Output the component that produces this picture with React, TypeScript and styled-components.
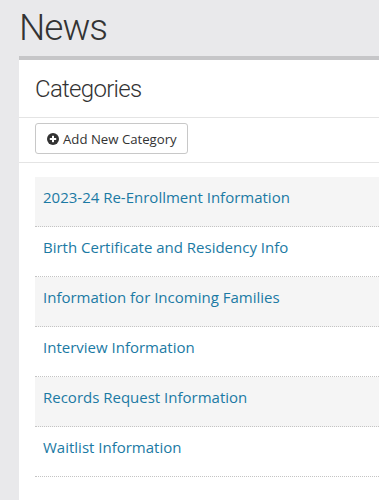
import styled, { createGlobalStyle } from 'styled-components'

const categories = [
  '2023-24 Re-Enrollment Information',
  'Birth Certificate and Residency Info',
  'Information for Incoming Families',
  'Interview Information',
  'Records Request Information',
  'Waitlist Information',
]

export default function App() {
  return (
    <>
      <GlobalStyle />
      <Page>
        <PageTitle>News</PageTitle>
        <Panel>
          <PanelHeader>
            <PanelTitle>Categories</PanelTitle>
          </PanelHeader>
          <Toolbar>
            <Button type="button">
              <PlusCircle />
              Add New Category
            </Button>
          </Toolbar>
          <List>
            {categories.map((c, i) => (
              <Row key={c} shaded={i % 2 === 0}>
                <Link href="#">{c}</Link>
              </Row>
            ))}
          </List>
        </Panel>
      </Page>
    </>
  )
}

function PlusCircle() {
  return (
    <svg width="12" height="12" viewBox="0 0 12 12" aria-hidden="true">
      <circle cx="6" cy="6" r="6" fill="#333" />
      <rect x="2.8" y="5" width="6.4" height="2" fill="#fff" />
      <rect x="5" y="2.8" width="2" height="6.4" fill="#fff" />
    </svg>
  )
}

const GlobalStyle = createGlobalStyle`
  html, body {
    margin: 0;
    background: #e9e9eb;
  }
  * { box-sizing: border-box; }
`

const Page = styled.div`
  min-height: 500px;
  display: flex;
  flex-direction: column;
  padding-top: 4px;
  overflow: hidden;
`

const PageTitle = styled.h1`
  margin: 0 0 5px 19px;
  font-family: Roboto, sans-serif;
  font-weight: 300;
  font-size: 37px;
  letter-spacing: -1px;
  line-height: 47px;
  color: #333;
`

const Panel = styled.div`
  flex: 1;
  margin-left: 19px;
  background: #fff;
  border-top: 4px solid #c6c6c8;
`

const PanelHeader = styled.div`
  height: 58px;
  display: flex;
  align-items: center;
  padding-left: 16px;
  border-bottom: 1px solid #e4e4e4;
`

const PanelTitle = styled.h2`
  margin: 0;
  font-family: Roboto, sans-serif;
  font-weight: 300;
  font-size: 24px;
  letter-spacing: -0.7px;
  color: #333;
`

const Toolbar = styled.div`
  display: flex;
  padding: 5px 16px 8px;
  border-bottom: 1px solid #e4e4e4;
`

const Button = styled.button`
  display: flex;
  align-items: center;
  gap: 4px;
  height: 31px;
  padding: 0 10px 0 11px;
  background: #fff;
  border: 1px solid #c8c8c8;
  border-radius: 3px;
  font-family: "Open Sans", sans-serif;
  font-size: 13.2px;
  color: #333;
  cursor: pointer;
`

const List = styled.div`
  padding: 14px 0 0 16px;
`

const Row = styled.div<{ shaded: boolean }>`
  height: 50px;
  padding: 10px 8px 0;
  background: ${p => (p.shaded ? '#f5f5f5' : '#fff')};
  border-bottom: 1px dotted #c4c4c4;
`

const Link = styled.a`
  font-family: "Open Sans", sans-serif;
  font-size: 15px;
  line-height: 20px;
  color: #1b7aa4;
  text-decoration: none;
`
